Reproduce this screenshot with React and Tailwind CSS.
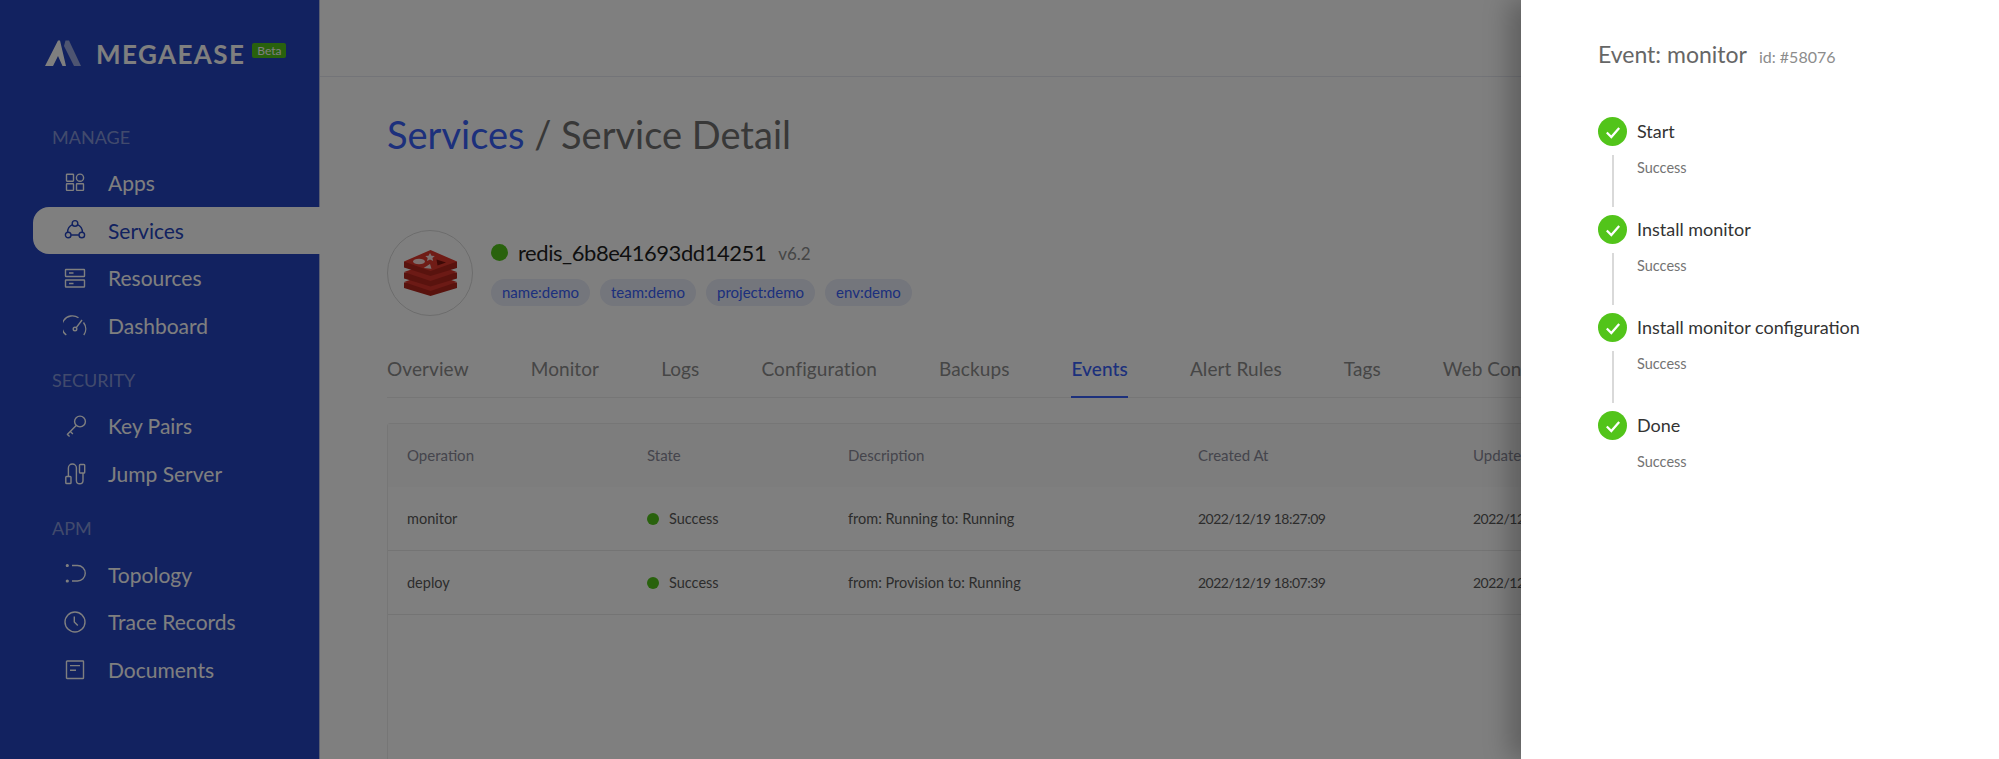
import { Fragment } from 'react'

// sidebar icons, all drawn on a 24px box
const icon = 'w-6 h-6 shrink-0 fill-none stroke-current stroke-[1.4]'

const AppsIcon = () => (
  <svg viewBox="0 0 24 24" className={icon}>
    <rect x="3.5" y="3.2" width="7" height="7" rx="0.6" />
    <circle cx="17" cy="6.7" r="3.6" />
    <rect x="3.5" y="12.8" width="7" height="6.6" rx="0.6" />
    <rect x="13.5" y="12.8" width="7" height="6.6" rx="0.6" />
  </svg>
)
const ServicesIcon = () => (
  <svg viewBox="0 0 24 24" className={icon}>
    <circle cx="12" cy="5.4" r="2.8" />
    <circle cx="5.2" cy="17" r="2.8" />
    <circle cx="18.8" cy="17" r="2.8" />
    <path d="M8.1 17h7.8M4.6 14.2A8.4 8.4 0 0 1 9.4 6.6M14.6 6.6a8.4 8.4 0 0 1 4.8 7.6" />
  </svg>
)
const ResourcesIcon = () => (
  <svg viewBox="0 0 24 24" className={icon}>
    <rect x="2.5" y="3.5" width="19" height="7" rx="0.5" />
    <rect x="2.5" y="14" width="19" height="7" rx="0.5" />
    <path d="M6 7h4.500M6 17.500h4.500" />
  </svg>
)
const DashboardIcon = () => (
  <svg viewBox="0 0 24 24" className={icon}>
    <path d="M3.300 21A10.500 10.500 0 0 1 15.500 3.800M20.500 8.500a10.500 10.500 0 0 1 .3 12.500" />
    <circle cx="12" cy="15" r="1.800" />
    <path d="M13.300 13.700 19 6" />
  </svg>
)
const KeyIcon = () => (
  <svg viewBox="0 0 24 24" className={icon}>
    <circle cx="17" cy="7.500" r="5.400" />
    <path d="M13.200 11.400 4 20.800M7.300 17.500l2.600 2.400M4.400 20.400l2.200 2" />
  </svg>
)
const JumpIcon = () => (
  <svg viewBox="0 0 24 24" className={icon}>
    <rect x="2.800" y="14.500" width="5.200" height="7" rx="0.8" />
    <rect x="16.500" y="2.500" width="5.200" height="8.500" rx="0.8" />
    <path d="M5.400 14.500V6a4 4 0 0 1 8 0v12.500a3.300 3.300 0 0 0 6.600 0V11" />
  </svg>
)
const TopologyIcon = () => (
  <svg viewBox="0 0 24 24" className={icon}>
    <path d="M9 3.500h5.500a7.500 7.500 0 0 1 0 15.500H9" />
    <circle cx="4.300" cy="3.500" r="0.9" fill="currentColor" />
    <circle cx="4.300" cy="19" r="0.9" fill="currentColor" />
  </svg>
)
const ClockIcon = () => (
  <svg viewBox="0 0 24 24" className={icon}>
    <circle cx="12" cy="12" r="10" />
    <path d="M11.300 6.500v5.500l3.500 3.500" />
  </svg>
)
const DocIcon = () => (
  <svg viewBox="0 0 24 24" className={icon}>
    <rect x="3.500" y="3" width="17" height="17.500" rx="0.6" />
    <path d="M7 7.600h10M7 12.200h6" />
  </svg>
)

const menu = [
  { title: 'MANAGE', items: [['Apps', AppsIcon], ['Services', ServicesIcon, true], ['Resources', ResourcesIcon], ['Dashboard', DashboardIcon]] },
  { title: 'SECURITY', items: [['Key Pairs', KeyIcon], ['Jump Server', JumpIcon]] },
  { title: 'APM', items: [['Topology', TopologyIcon], ['Trace Records', ClockIcon], ['Documents', DocIcon]] },
]

const Logo = () => (
  <svg viewBox="0 0 36 26" className="w-9 h-[26px] shrink-0">
    <path d="M0 26 13 0.500h2L21 26h-3.500L13 16 8 26Z" fill="#fff" />
    <path d="M20.500 0.500h3.500L36 26h-7L19 6Z" fill="#fff" fillOpacity="0.55" />
  </svg>
)

const RedisLogo = () => (
  <svg viewBox="0 0 53 46" className="w-[53px] h-[46px]">
    <path d="M0 32.500v5.500L26.500 46 53 38v-5.500Z" fill="#b3261d" />
    <path d="M0 32 26.500 23 53 32 26.500 41Z" fill="#d8342a" />
    <path d="M0 22.500v6L26.500 36.500 53 28.500v-6Z" fill="#b3261d" />
    <path d="M0 22 26.500 13 53 22 26.500 31Z" fill="#d8342a" />
    <path d="M0 11.500v6L26.500 26 53 18v-6.500Z" fill="#b3261d" />
    <path d="M0 11.500 26.500 0 53 11.500 26.500 21Z" fill="#e0382d" />
    <path d="M26 3l1.500 2.700 3.300.3-2.400 1.900.8 3-3.200-1.500-3 1.500.7-3-2.400-1.900 3.200-.3Z" fill="#fff" fillOpacity="0.85" />
    <ellipse cx="15" cy="11.500" rx="6" ry="2.800" fill="#fff" fillOpacity="0.85" />
    <path d="M26 14l1.500 4.800-7.800-.9Z" fill="#fff" fillOpacity="0.85" />
    <path d="M32.500 9.500 42 12.500l-8.500 3Z" fill="#7a120c" />
  </svg>
)

const tags = ['name:demo', 'team:demo', 'project:demo', 'env:demo']
const tabs = ['Overview', 'Monitor', 'Logs', 'Configuration', 'Backups', 'Events', 'Alert Rules', 'Tags', 'Web Console']
const rows = [
  ['monitor', 'from: Running to: Running', '2022/12/19 18:27:09', '2022/12/19 18:27:09'],
  ['deploy', 'from: Provision to: Running', '2022/12/19 18:07:39', '2022/12/19 18:07:39'],
]
const steps = ['Start', 'Install monitor', 'Install monitor configuration', 'Done']

export default function App() {
  return (
    <div className="relative flex h-[759px] w-full overflow-hidden bg-white font-['Lato',sans-serif]">
      <aside className="w-[320px] shrink-0 bg-[#2444c0] border-r border-[#b4bce0] text-white pt-[40px]">
        <div className="flex items-center pl-[45px] h-[26px]">
          <Logo />
          <span className="ml-[15px] mt-[2px] text-[26px] leading-none font-bold tracking-[1.4px]">MEGAEASE</span>
          <span className="ml-[7px] mt-[-6px] px-[5px] h-[15px] leading-[15px] rounded-[2px] bg-[#52c41a] text-[12px]">Beta</span>
        </div>
        <nav className="mt-[46px]">
          {menu.map(group => (
            <div key={group.title} className="mb-[6px]">
              <div className="h-[47px] pl-[52px] pt-[3px] flex items-center text-[18px] text-white/45">{group.title}</div>
              {group.items.map(([label, Icon, active]) => (
                <div
                  key={label}
                  className={active
                    ? 'h-[47.6px] ml-[33px] -mr-px pl-[30px] flex items-center gap-[21px] text-[21px] rounded-l-2xl bg-white text-[#2444c0]'
                    : 'h-[47.6px] ml-[33px] pl-[30px] flex items-center gap-[21px] text-[21px] text-white'}
                >
                  <Icon />
                  <span>{label}</span>
                </div>
              ))}
            </div>
          ))}
        </nav>
      </aside>

      <main className="flex-1 min-w-0">
        <div className="h-[77px] border-b border-[#e6e8f0]" />
        <div className="pl-[67px]">
          <h1 className="mt-[33px] text-[38px] leading-[48px] font-normal text-[#707070]">
            <span className="text-[#3860f8]">Services</span> / Service Detail
          </h1>

          <div className="mt-[72px] flex">
            <div className="w-[86px] h-[86px] rounded-full border border-[#d9d9d9] flex items-center justify-center">
              <RedisLogo />
            </div>
            <div className="ml-[18px]">
              <div className="flex items-center h-[44px]">
                <span className="w-[17px] h-[17px] rounded-full bg-[#52c41a]" />
                <span className="ml-[10px] text-[22px] tracking-[-0.45px] text-[#1f1f1f]">redis_6b8e41693dd14251</span>
                <span className="ml-[12px] mt-[3px] text-[17px] text-[#8c8c8c]">v6.2</span>
              </div>
              <div className="mt-[5px] flex gap-[10px]">
                {tags.map(t => (
                  <span key={t} className="h-[27px] px-[11px] rounded-[14px] bg-[#e8ecf8] text-[#3860f8] text-[15px] leading-[27px]">{t}</span>
                ))}
              </div>
            </div>
          </div>

          <div className="mt-[24px] h-[58px] flex gap-[62px] whitespace-nowrap border-b border-[#ededed]">
            {tabs.map(t => (
              <div
                key={t}
                className={t === 'Events'
                  ? 'h-[58px] leading-[58px] text-[19px] tracking-[0.1px] text-[#3860f8] font-medium border-b-2 border-[#3860f8]'
                  : 'h-[58px] leading-[58px] text-[19px] tracking-[0.1px] text-[#8c8c8c]'}
              >
                {t}
              </div>
            ))}
          </div>

          <div className="mt-[25px] h-[400px] w-[1400px] border border-[#ededed] rounded-t-[3px]">
            <div className="h-[63px] grid grid-cols-[240px_201px_350px_275px_1fr] items-center px-[19px] bg-[#fafafa] text-[15px] text-[#8a8a99]">
              <span>Operation</span>
              <span>State</span>
              <span>Description</span>
              <span>Created At</span>
              <span>Updated At</span>
            </div>
            {rows.map(([op, desc, created, updated]) => (
              <Fragment key={op}>
                <div className="h-[64px] grid grid-cols-[240px_201px_350px_275px_1fr] items-center px-[19px] text-[14.5px] text-[#595959] border-b border-[#e8e8e8]">
                  <span>{op}</span>
                  <span className="flex items-center gap-[10px]">
                    <span className="w-[12px] h-[12px] rounded-full bg-[#52c41a]" />
                    Success
                  </span>
                  <span>{desc}</span>
                  <span className="text-[14px] tracking-[-0.5px]">{created}</span>
                  <span className="text-[14px] tracking-[-0.5px]">{updated}</span>
                </div>
              </Fragment>
            ))}
          </div>
        </div>
      </main>

      {/* mask and drawer */}
      <div className="absolute inset-0 bg-black/50" />
      <div className="absolute top-0 right-0 bottom-0 w-[478px] bg-white pl-[77px] pt-[41px] shadow-[-12px_0_24px_rgba(0,0,0,0.25)]">
        <div className="flex items-baseline">
          <span className="text-[23px] leading-[26px] text-[#666]">Event: monitor</span>
          <span className="ml-[12px] text-[16px] text-[#8c8c8c]">id: #58076</span>
        </div>
        <div className="mt-[48px]">
          {steps.map((s, i) => (
            <div key={s} className="flex h-[98px] gap-[10px]">
              <div className="w-[29px] flex flex-col items-center">
                <span className="w-[29px] h-[29px] rounded-full bg-[#52c41a] flex items-center justify-center shrink-0">
                  <svg viewBox="0 0 16 16" className="w-[18px] h-[18px] fill-none stroke-white stroke-2">
                    <path d="M2.500 8.500 6.500 12.500 13.500 4.500" />
                  </svg>
                </span>
                {i < steps.length - 1 && <span className="mt-[9px] w-[2px] h-[52px] bg-[#d9d9d9]" />}
              </div>
              <div>
                <div className="h-[29px] leading-[29px] text-[18px] text-[#333]">{s}</div>
                <div className="mt-[15px] leading-[14px] text-[14.5px] text-[#737373]">Success</div>
              </div>
            </div>
          ))}
        </div>
      </div>
    </div>
  )
}
